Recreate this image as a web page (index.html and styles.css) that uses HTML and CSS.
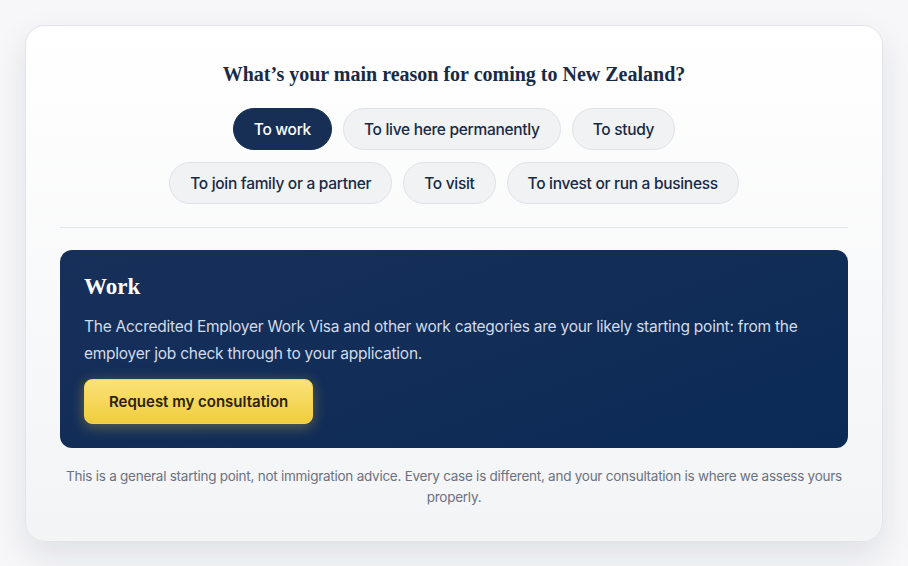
FILE: index.html
```html
<!DOCTYPE html>
<html lang="en">
<head>
    <meta charset="UTF-8">
    <meta name="viewport" content="width=device-width, initial-scale=1.0">
    <title>Find your visa pathway</title>
    <link rel="stylesheet" href="styles.css">
</head>
<body>

    <div class="pathway-card">
        <h2 class="question">What’s your main reason for coming to New Zealand?</h2>

        <div class="options">
            <button class="option active">To work</button>
            <button class="option">To live here permanently</button>
            <button class="option">To study</button>
            <button class="option">To join family or a partner</button>
            <button class="option">To visit</button>
            <button class="option">To invest or run a business</button>
        </div>

        <hr class="divider">

        <div class="result">
            <h3>Work</h3>
            <p>The Accredited Employer Work Visa and other work categories are your likely starting point: from the employer job check through to your application.</p>
            <button class="cta">Request my consultation</button>
        </div>

        <p class="disclaimer">This is a general starting point, not immigration advice. Every case is different, and your consultation is where we assess yours properly.</p>
    </div>

</body>
</html>
```

FILE: styles.css
```css
body {
    margin: 0;
    padding: 25px;
    background: #f7f7f9;
    font-family: 'Inter', 'Liberation Sans', sans-serif;
    color: #172a46;
}

.pathway-card {
    background: linear-gradient(180deg, #ffffff 0%, #f3f4f6 100%);
    border: 1px solid #e2e4ea;
    border-radius: 20px;
    box-shadow: 0 14px 34px rgba(20, 30, 60, 0.10);
    padding: 34px 34px 0;
    height: 517px;
    box-sizing: border-box;
}

.question {
    font-family: 'Liberation Serif', 'DejaVu Serif', serif;
    font-size: 20px;
    font-weight: bold;
    text-align: center;
    margin: 0 0 20px;
    color: #172a46;
    line-height: 28px;
}

.options {
    display: flex;
    flex-wrap: wrap;
    justify-content: center;
    gap: 12px 11px;
    max-width: 620px;
    margin: 0 auto;
}

.option {
    font-family: inherit;
    font-size: 15.5px;
    font-weight: 500;
    letter-spacing: -0.3px;
    color: #172a46;
    background: #f1f2f4;
    border: 1px solid #e0e2e7;
    border-radius: 999px;
    height: 42px;
    padding: 0 20px;
    cursor: pointer;
}

.option.active {
    background: #172f55;
    border-color: #172f55;
    color: #ffffff;
}

.divider {
    border: none;
    border-top: 1px solid #e3e5ea;
    margin: 23px 0 22px;
}

.result {
    background: linear-gradient(160deg, #17305a 0%, #0b2a56 100%);
    border-radius: 12px;
    padding: 23px 24px 24px;
    color: #ffffff;
}

.result h3 {
    font-family: 'Liberation Serif', 'DejaVu Serif', serif;
    font-size: 23px;
    font-weight: bold;
    margin: 0 0 12px;
    line-height: 28px;
}

.result p {
    margin: 0 -14px 12px 0;
    font-size: 15.5px;
    letter-spacing: -0.25px;
    line-height: 27px;
    color: #d2dbe8;
}

.cta {
    font-family: inherit;
    font-size: 15px;
    font-weight: 600;
    color: #2b2208;
    background: linear-gradient(180deg, #fbe27a 0%, #f0cd3c 100%);
    border: 1px solid #f3d353;
    border-radius: 8px;
    height: 45px;
    padding: 0 24px;
    box-shadow: 0 3px 14px rgba(245, 205, 60, 0.35);
    cursor: pointer;
}

.disclaimer {
    text-align: center;
    font-size: 13.5px;
    letter-spacing: -0.25px;
    line-height: 21px;
    color: #6b7280;
    margin: 18px 0 0;
}
```
